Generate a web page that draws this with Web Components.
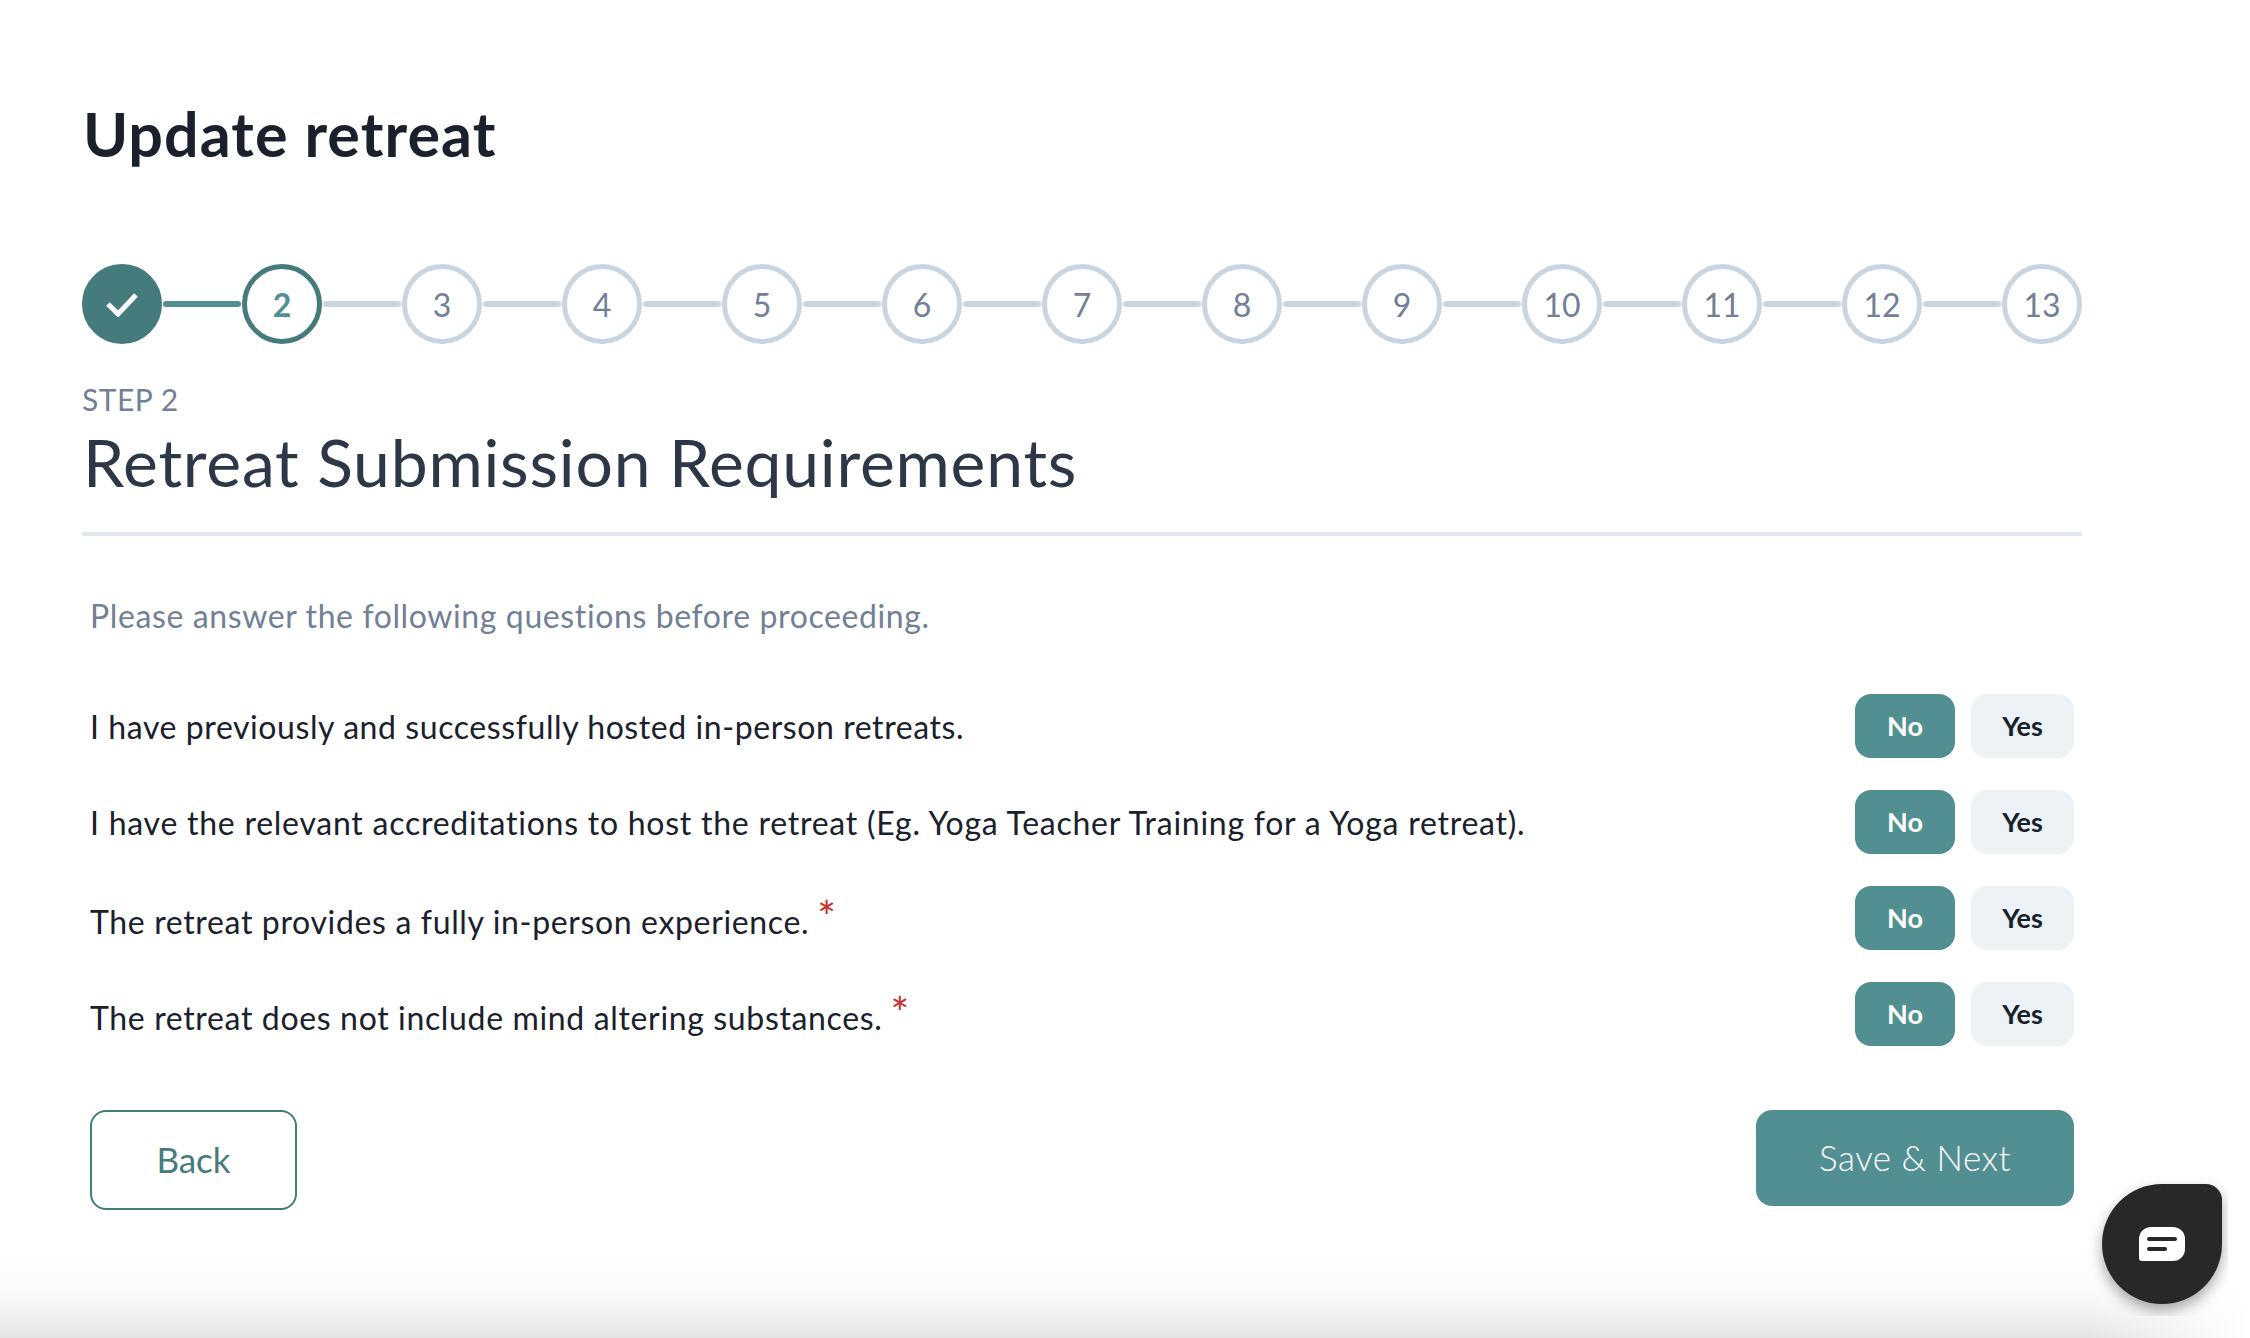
<!DOCTYPE html>
<html>
<head>
<meta charset="utf-8">
<title>Update retreat</title>
<style>
  html, body { margin: 0; height: 100%; background: #fff; }
  body { font-family: Lato, "Open Sans", sans-serif; font-variant-ligatures: none; color: #1a202c; overflow: hidden; }
</style>
</head>
<body>
<template id="tpl-page">
  <style>
    :host { display: block; position: relative; height: 1338px; box-sizing: border-box; padding: 96px 168px 0 82px; overflow: hidden; }
    h1 { margin: 0 0 92px 1px; font-size: 61px; line-height: 76px; font-weight: 700; color: #1a202c; letter-spacing: 1.07px; }
    .fade { position: absolute; left: 0; right: 0; bottom: 0; height: 90px; pointer-events: none;
      background:
        linear-gradient(to right, rgba(255,255,255,0) 2090px, #fff 2250px),
        linear-gradient(to bottom, rgba(255,255,255,0) 0, #fbfbfb 44%, #f5f5f5 63%, #eeeeee 80%, #e4e4e4 100%); }
  </style>
  <h1><slot name="title"></slot></h1>
  <slot></slot>
  <div class="fade"></div>
</template>

<template id="tpl-stepper">
  <style>
    :host { display: flex; align-items: center; height: 80px; }
    .line { flex: 1; height: 6px; margin: 0 1px; border-radius: 3px; background: #cbd5e0; }
    .line.on { background: #528f92; }
  </style>
</template>

<template id="tpl-step">
  <style>
    :host { display: flex; flex: none; width: 80px; height: 80px; box-sizing: border-box; border: 5px solid #cbd5e0; border-radius: 50%; align-items: center; justify-content: center; font-size: 32px; color: #718096; background: #fff; }
    :host([state="current"]) { border-color: #457b7d; color: #528f92; font-weight: 700; }
    :host([state="done"]) { border-color: #457b7d; background: #457b7d; }
  </style>
  <slot></slot>
</template>

<template id="tpl-heading">
  <style>
    :host { display: block; margin-top: 37px; padding-bottom: 30px; border-bottom: 4px solid #e2e8f0; }
    .eyebrow { font-size: 30px; line-height: 36px; color: #718096; letter-spacing: .5px; }
    .title { font-size: 66px; line-height: 80px; color: #2d3748; margin: 5px 0 0 1px; letter-spacing: .78px; }
  </style>
  <div class="eyebrow"><slot name="eyebrow"></slot></div>
  <div class="title"><slot></slot></div>
</template>

<template id="tpl-form">
  <style>
    :host { display: block; padding: 56px 8px 0; }
    .intro { font-size: 32px; line-height: 48px; color: #718096; margin-bottom: 54px; letter-spacing: .61px; }
    .rows { display: flex; flex-direction: column; gap: 32px; }
    .actions { display: flex; justify-content: space-between; align-items: flex-start; margin-top: 64px; }
  </style>
  <div class="intro"><slot name="intro"></slot></div>
  <div class="rows"><slot></slot></div>
  <div class="actions"><slot name="actions"></slot></div>
</template>

<template id="tpl-question">
  <style>
    :host { display: flex; align-items: center; justify-content: space-between; height: 64px; font-size: 32px; color: #1a202c; letter-spacing: var(--track, .65px); }
    :host([required]) .text { padding-top: 6px; }
    .req { color: #c53030; font-size: 44px; line-height: 0; position: relative; top: -1px; margin-left: 8px; }
    .btns { display: flex; gap: 16px; letter-spacing: 0; }
    .b { height: 64px; padding-bottom: 1px; box-sizing: border-box; border-radius: 16px; display: flex; align-items: center; justify-content: center; font-size: 27px; font-weight: 700; }
    .no { width: 100px; background: #528f92; color: #fff; }
    .yes { width: 103px; background: #edf2f7; color: #1a202c; }
  </style>
  <div class="text"><slot></slot><span class="req" hidden>*</span></div>
  <div class="btns"><div class="b no">No</div><div class="b yes">Yes</div></div>
</template>

<template id="tpl-button">
  <style>
    :host { display: flex; align-items: center; justify-content: center; box-sizing: border-box; padding-bottom: 2px; border-radius: 16px; font-size: 35px; }
    :host([kind="back"]) { width: 207px; height: 100px; border: 2px solid #457b7d; color: #457b7d; }
    :host([kind="next"]) { width: 318px; height: 96px; background: #528f92; color: #fff; font-weight: 300; letter-spacing: .5px; }
  </style>
  <slot></slot>
</template>

<template id="tpl-chat">
  <style>
    :host { position: absolute; z-index: 1; left: 2102px; top: 1184px; width: 120px; height: 120px; border-radius: 60px 16px 60px 60px; background: #282828; box-shadow: 0 6px 14px rgba(0,0,0,.35); clip-path: inset(-20px -6px -12px -20px); display: flex; align-items: center; justify-content: center; }
    svg { width: 46px; height: 34px; display: block; }
  </style>
  <svg viewBox="0 0 46 34"><path fill="#fff" d="M12 0H34A12 12 0 0 1 46 12V22A12 12 0 0 1 34 34H3A3 3 0 0 1 0 31V12A12 12 0 0 1 12 0Z"/><rect x="8" y="10" width="30" height="4" rx="2" fill="#282828"/><rect x="8" y="20" width="20" height="4" rx="2" fill="#282828"/></svg>
</template>

<retreat-page>
  <span slot="title">Update retreat</span>
  <retreat-stepper current="2" total="13"></retreat-stepper>
  <section-heading>
    <span slot="eyebrow">STEP 2</span>
    Retreat Submission Requirements
  </section-heading>
  <retreat-form>
    <span slot="intro">Please answer the following questions before proceeding.</span>
    <form-question style="--track: .58px">I have previously and successfully hosted in-person retreats.</form-question>
    <form-question style="--track: .75px">I have the relevant accreditations to host the retreat (Eg. Yoga Teacher Training for a Yoga retreat).</form-question>
    <form-question required>The retreat provides a fully in-person experience.</form-question>
    <form-question required>The retreat does not include mind altering substances.</form-question>
    <form-button slot="actions" kind="back">Back</form-button>
    <form-button slot="actions" kind="next">Save &amp; Next</form-button>
  </retreat-form>
  <chat-launcher></chat-launcher>
</retreat-page>

<script>
  // Base class: clones the element's template into an open shadow root.
  class TemplateElement extends HTMLElement {
    constructor(id) {
      super();
      this.attachShadow({ mode: "open" });
      this.shadowRoot.appendChild(document.getElementById(id).content.cloneNode(true));
    }
  }

  class RetreatPage extends TemplateElement { constructor() { super("tpl-page"); } }
  class SectionHeading extends TemplateElement { constructor() { super("tpl-heading"); } }
  class RetreatForm extends TemplateElement { constructor() { super("tpl-form"); } }
  class FormButton extends TemplateElement { constructor() { super("tpl-button"); } }
  class ChatLauncher extends TemplateElement { constructor() { super("tpl-chat"); } }
  class StepCircle extends TemplateElement { constructor() { super("tpl-step"); } }

  class FormQuestion extends TemplateElement {
    constructor() { super("tpl-question"); }
    connectedCallback() {
      // Only the required questions show the red star.
      this.shadowRoot.querySelector(".req").hidden = !this.hasAttribute("required");
    }
  }

  class RetreatStepper extends TemplateElement {
    constructor() { super("tpl-stepper"); }
    connectedCallback() {
      const current = Number(this.getAttribute("current"));
      const total = Number(this.getAttribute("total"));
      for (let i = 1; i <= total; i++) {
        const step = document.createElement("step-circle");
        if (i < current) {
          step.setAttribute("state", "done");
          step.innerHTML = '<svg viewBox="0 0 34 26" style="width:34px;height:26px;display:block"><path d="M3 13l10 10L31 4" fill="none" stroke="#fff" stroke-width="5"/></svg>';
        } else {
          if (i === current) step.setAttribute("state", "current");
          step.textContent = i;
        }
        this.shadowRoot.appendChild(step);
        if (i < total) {
          const line = document.createElement("div");
          line.className = i < current ? "line on" : "line";
          this.shadowRoot.appendChild(line);
        }
      }
    }
  }

  customElements.define("retreat-page", RetreatPage);
  customElements.define("section-heading", SectionHeading);
  customElements.define("retreat-form", RetreatForm);
  customElements.define("form-button", FormButton);
  customElements.define("chat-launcher", ChatLauncher);
  customElements.define("step-circle", StepCircle);
  customElements.define("form-question", FormQuestion);
  customElements.define("retreat-stepper", RetreatStepper);
</script>
</body>
</html>
